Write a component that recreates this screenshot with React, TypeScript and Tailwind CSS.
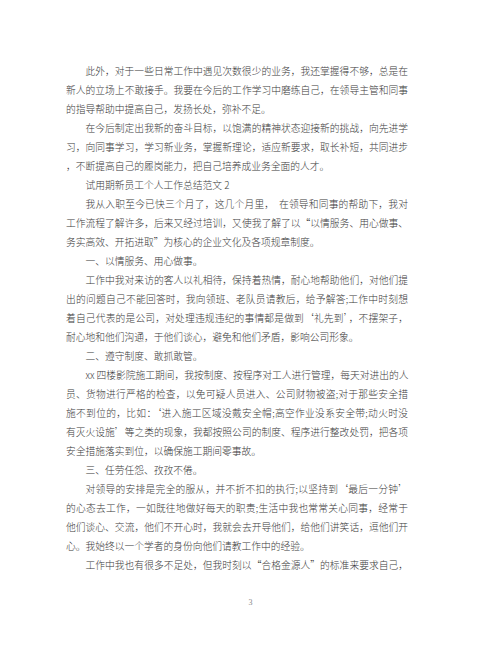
type Line = { t: string; indent?: boolean; last?: boolean }

const lines: Line[] = [
  { t: '此外，对于一些日常工作中遇见次数很少的业务，我还掌握得不够，总是在', indent: true },
  { t: '新人的立场上不敢接手。我要在今后的工作学习中磨练自己，在领导主管和同事' },
  { t: '的指导帮助中提高自己，发扬长处，弥补不足。', last: true },
  { t: '在今后制定出我新的奋斗目标，以饱满的精神状态迎接新的挑战，向先进学', indent: true },
  { t: '习，向同事学习，学习新业务，掌握新理论，适应新要求，取长补短，共同进步' },
  { t: '，不断提高自己的履岗能力，把自己培养成业务全面的人才。', last: true },
  { t: '试用期新员工个人工作总结范文 2', indent: true, last: true },
  { t: '我从入职至今已快三个月了，这几个月里，  在领导和同事的帮助下，我对', indent: true },
  { t: '工作流程了解许多，后来又经过培训，又使我了解了以“以情服务、用心做事、' },
  { t: '务实高效、开拓进取”为核心的企业文化及各项规章制度。', last: true },
  { t: '一、以情服务、用心做事。', indent: true, last: true },
  { t: '工作中我对来访的客人以礼相待，保持着热情，耐心地帮助他们，对他们提', indent: true },
  { t: '出的问题自己不能回答时，我向领班、老队员请教后，给予解答;工作中时刻想' },
  { t: '着自己代表的是公司，对处理违规违纪的事情都是做到‘礼先到’，不摆架子，' },
  { t: '耐心地和他们沟通，于他们谈心，避免和他们矛盾，影响公司形象。', last: true },
  { t: '二、遵守制度、敢抓敢管。', indent: true, last: true },
  { t: 'xx 四楼影院施工期间，我按制度、按程序对工人进行管理，每天对进出的人', indent: true },
  { t: '员、货物进行严格的检查，以免可疑人员进入、公司财物被盗;对于那些安全措' },
  { t: '施不到位的，比如：‘进入施工区域没戴安全帽;高空作业没系安全带;动火时没' },
  { t: '有灭火设施’等之类的现象，我都按照公司的制度、程序进行整改处罚，把各项' },
  { t: '安全措施落实到位，以确保施工期间零事故。', last: true },
  { t: '三、任劳任怨、孜孜不倦。', indent: true, last: true },
  { t: '对领导的安排是完全的服从，并不折不扣的执行;以坚持到‘最后一分钟’', indent: true },
  { t: '的心态去工作，一如既往地做好每天的职责;生活中我也常常关心同事，经常于' },
  { t: '他们谈心、交流，他们不开心时，我就会去开导他们，给他们讲笑话，逗他们开' },
  { t: '心。我始终以一个学者的身份向他们请教工作中的经验。', last: true },
  { t: '工作中我也有很多不足处，但我时刻以“合格金源人”的标准来要求自己，', indent: true },
]

export default function App() {
  return (
    <div className="w-[500px] h-[647px] bg-white flex flex-col items-center text-[#3a3a3a] font-['Noto_Sans_CJK_SC','Liberation_Serif',serif]">
      <div className="w-[342px] pt-[62px] text-[9.75px] leading-[19px] font-light ml-[-26px]">
        {lines.map((l, i) => (
          <div
            key={i}
            className={
              (l.indent ? 'pl-[19.5px] ' : '') +
              (l.last ? 'text-left whitespace-pre' : 'text-justify [text-align-last:justify] whitespace-pre')
            }
          >
            {l.t}
          </div>
        ))}
      </div>
      <div className="mt-[23px] text-[8px] leading-[10px] text-[#888] font-['Liberation_Serif',serif] ml-[1px]">3</div>
    </div>
  )
}
